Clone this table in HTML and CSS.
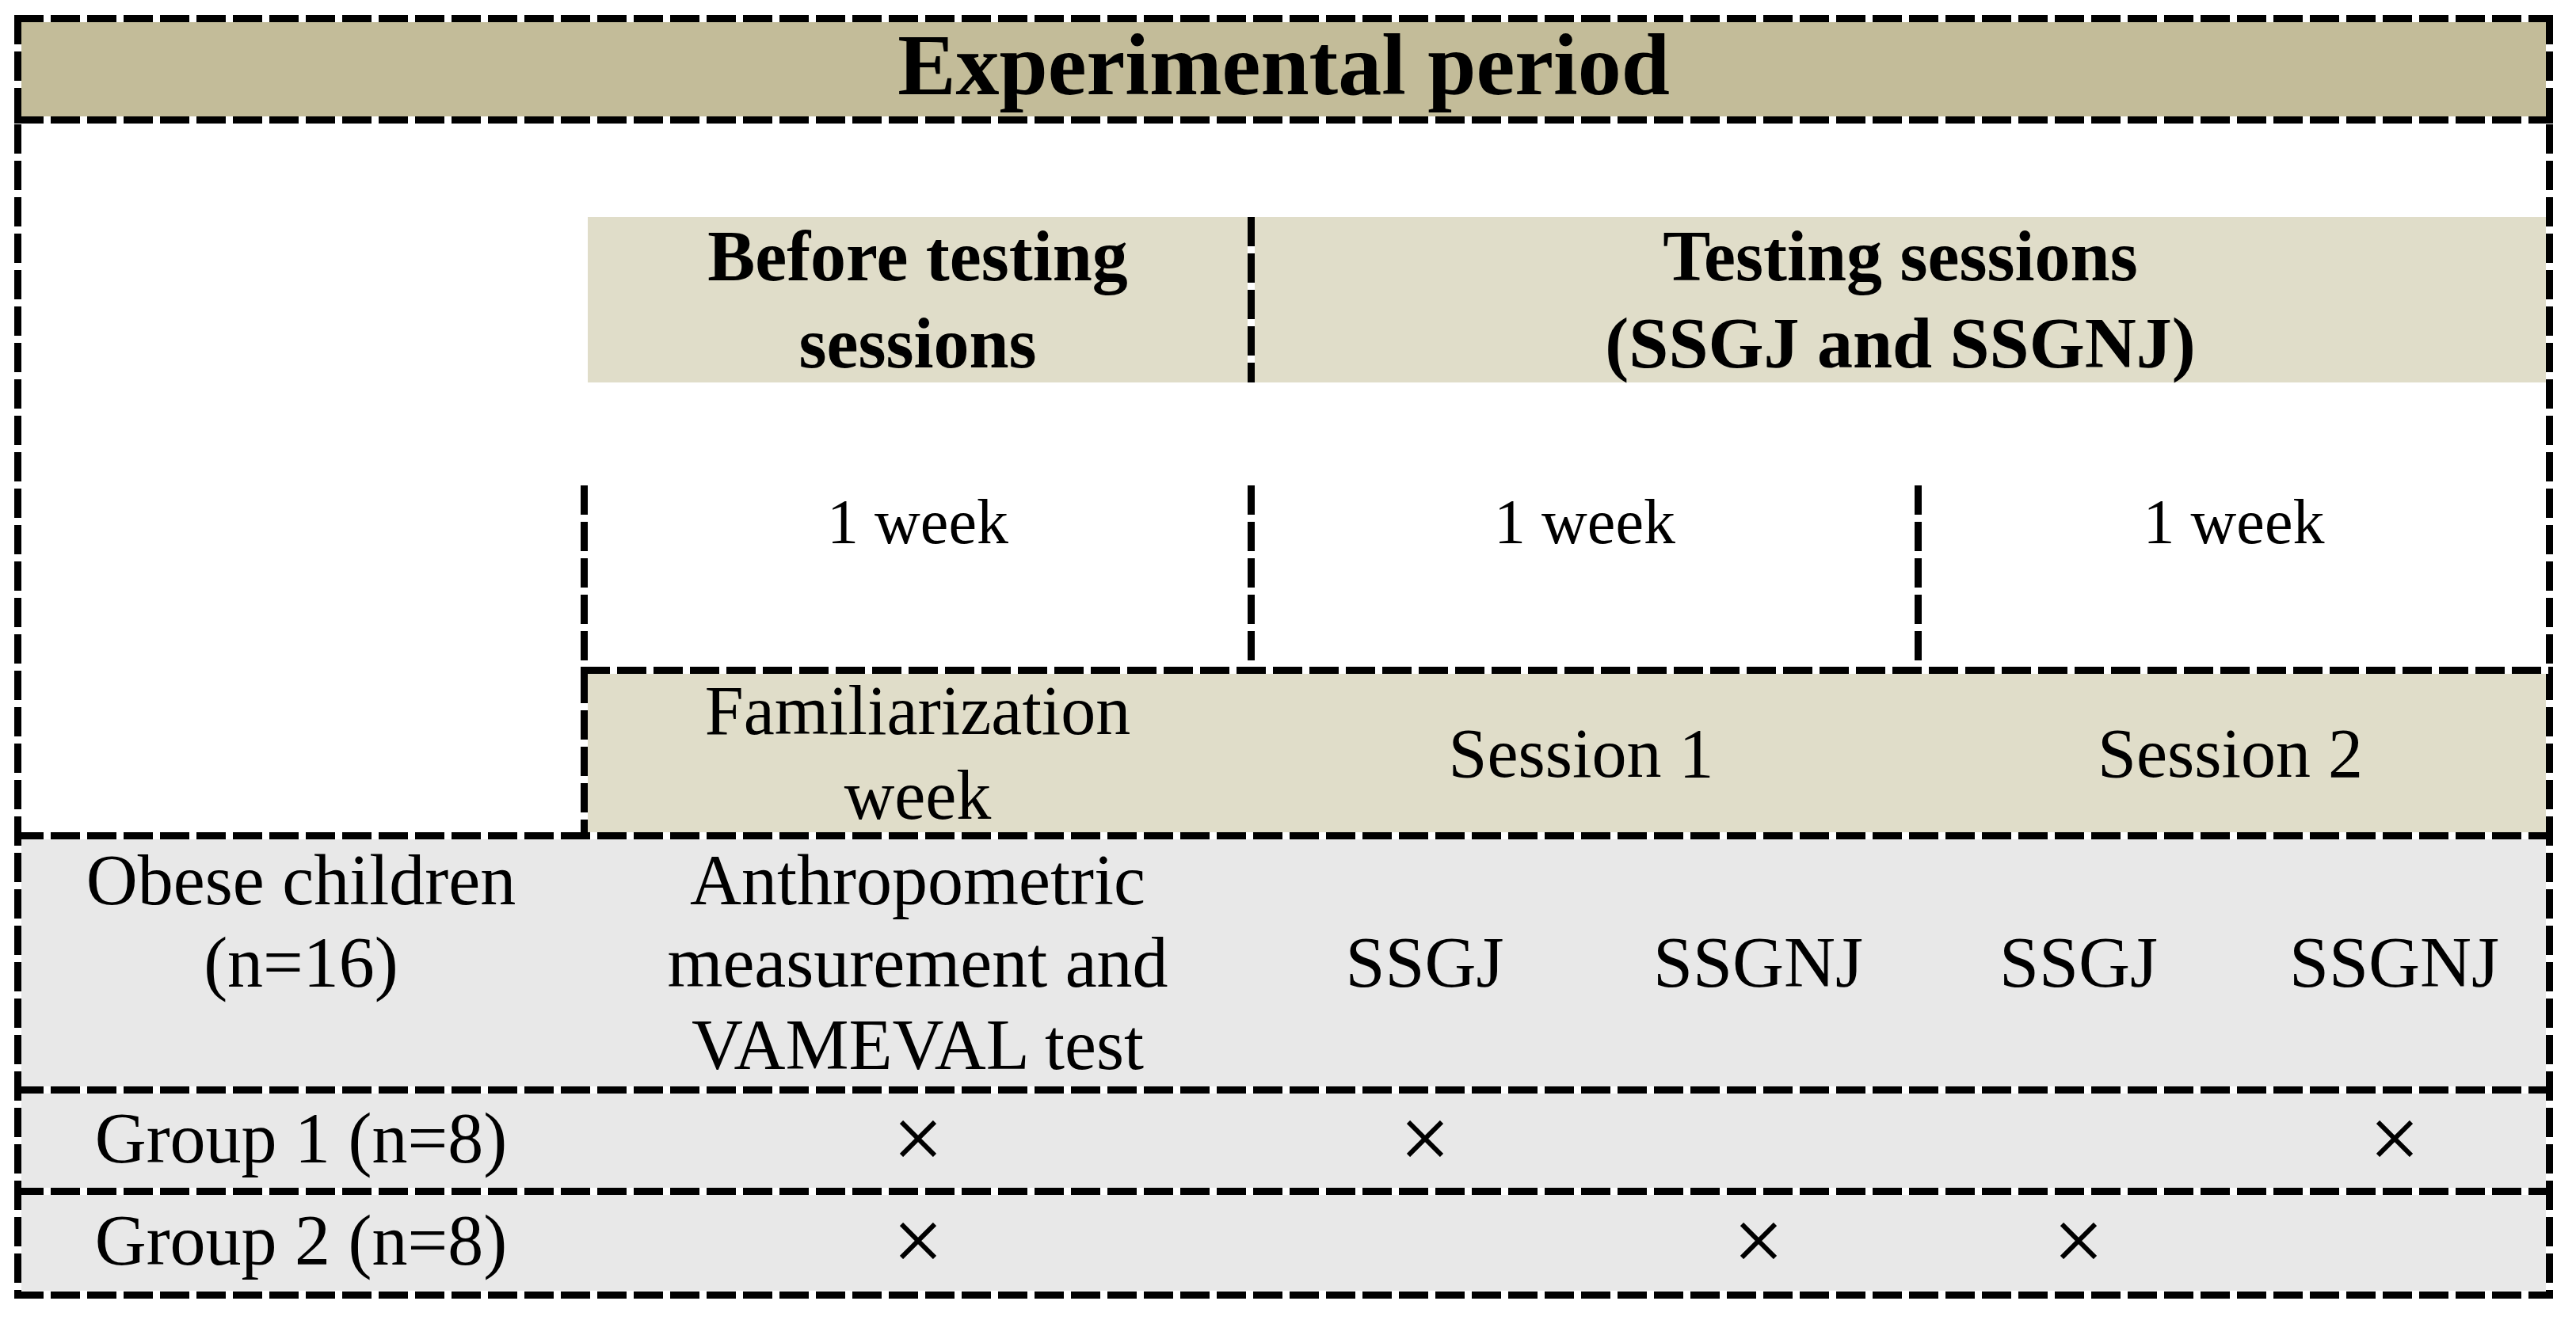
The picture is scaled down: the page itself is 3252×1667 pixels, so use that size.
FILE: index.html
```html
<!DOCTYPE html>
<html lang="en">
<head>
<meta charset="utf-8">
<title>Experimental period</title>
<link rel="stylesheet" href="styles.css">
</head>
<body>
<div class="figure">
  <div class="title">Experimental period</div>
  <div class="hline title-line"></div>
  <div class="grid">
    <div class="hdr hdr-before">Before testing<br>sessions</div>
    <div class="hdr hdr-testing stripe">Testing sessions<br>(SSGJ and SSGNJ)</div>

    <div class="wk wk-1 stripe">1 week</div>
    <div class="wk wk-2 stripe">1 week</div>
    <div class="wk wk-3 stripe">1 week</div>

    <div class="hline line-a"></div>

    <div class="sess sess-1 stripe">Familiarization<br>week</div>
    <div class="sess sess-2">Session 1</div>
    <div class="sess sess-3">Session 2</div>

    <div class="hline line-b"></div>

    <div class="cell r-obese c0 top">Obese children<br>(n=16)</div>
    <div class="cell r-obese c1">Anthropometric<br>measurement and<br>VAMEVAL test</div>
    <div class="cell r-obese c2">SSGJ</div>
    <div class="cell r-obese c3">SSGNJ</div>
    <div class="cell r-obese c4">SSGJ</div>
    <div class="cell r-obese c5">SSGNJ</div>

    <div class="hline line-c"></div>

    <div class="cell r-g1 c0">Group 1 (n=8)</div>
    <div class="cell r-g1 c1"><svg class="mark" viewBox="0 0 46 46"><path d="M2 2L44 44M44 2L2 44"/></svg></div>
    <div class="cell r-g1 c2"><svg class="mark" viewBox="0 0 46 46"><path d="M2 2L44 44M44 2L2 44"/></svg></div>
    <div class="cell r-g1 c3"></div>
    <div class="cell r-g1 c4"></div>
    <div class="cell r-g1 c5"><svg class="mark" viewBox="0 0 46 46"><path d="M2 2L44 44M44 2L2 44"/></svg></div>

    <div class="hline line-d"></div>

    <div class="cell r-g2 c0">Group 2 (n=8)</div>
    <div class="cell r-g2 c1"><svg class="mark" viewBox="0 0 46 46"><path d="M2 2L44 44M44 2L2 44"/></svg></div>
    <div class="cell r-g2 c2"></div>
    <div class="cell r-g2 c3"><svg class="mark" viewBox="0 0 46 46"><path d="M2 2L44 44M44 2L2 44"/></svg></div>
    <div class="cell r-g2 c4"><svg class="mark" viewBox="0 0 46 46"><path d="M2 2L44 44M44 2L2 44"/></svg></div>
    <div class="cell r-g2 c5"></div>
  </div>
</div>
</body>
</html>
```
FILE: styles.css
```css
:root {
  --hd: repeating-linear-gradient(90deg, #000 0 37px, #fff 37px 46px);
  --vd: repeating-linear-gradient(180deg, #000 0 37px, #fff 37px 46px);
  --tan-dark: #c3bc99;
  --tan-light: #e0ddc9;
  --grey: #e8e8e8;
}

html, body {
  margin: 0;
  padding: 0;
  background: #fff;
}

body {
  font-family: "Liberation Serif", "Times New Roman", serif;
  color: #000;
}

.figure {
  box-sizing: border-box;
  margin: 19px 0 0 18px;
  width: 3205px;
  height: 1621px;
  padding: 9px;
  background:
    var(--hd) left top / 100% 9px no-repeat,
    var(--hd) left bottom / 100% 9px no-repeat,
    var(--vd) left top / 9px 100% no-repeat,
    var(--vd) right top / 9px 100% no-repeat,
    #fff;
}

.title {
  height: 119px;
  box-sizing: border-box;
  padding-bottom: 12px;
  background: var(--tan-dark);
  display: flex;
  align-items: center;
  justify-content: center;
  font-weight: bold;
  font-size: 110px;
  line-height: 1;
}

.hline {
  height: 9px;
  background: var(--hd);
}

.title-line {
  margin: 0 -9px;
}

.grid {
  display: grid;
  grid-template-columns: 706px 842px 447px 395px 414px 383px;
  grid-template-rows: 118px 209px 130px 229px 9px 200px 9px 312px 9px 119px 9px 121px;
}

.stripe {
  background: var(--vd) left top / 9px 100% no-repeat, #fff;
  padding-left: 9px;
}

.hdr {
  grid-row: 2;
  display: flex;
  align-items: center;
  justify-content: center;
  text-align: center;
  font-weight: bold;
  font-size: 90px;
  line-height: 110px;
  background-color: var(--tan-light);
}

.hdr-before {
  grid-column: 2;
  margin-left: 9px;
}

.hdr-testing {
  grid-column: 3 / 7;
  background: var(--vd) left top / 9px 100% no-repeat, var(--tan-light);
}

.wk {
  grid-row: 4;
  text-align: center;
  font-size: 80px;
  line-height: 92px;
}

.wk-1 { grid-column: 2; }
.wk-2 { grid-column: 3 / 5; }
.wk-3 { grid-column: 5 / 7; }

.line-a {
  grid-row: 5;
  grid-column: 2 / 7;
  margin-right: -9px;
}

.sess {
  grid-row: 6;
  display: flex;
  align-items: center;
  justify-content: center;
  text-align: center;
  font-size: 88px;
  line-height: 107px;
  background: var(--tan-light);
}

.sess-1 {
  grid-column: 2;
  background: var(--vd) left top / 9px 100% no-repeat, var(--tan-light);
}
.sess-2 { grid-column: 3 / 5; }
.sess-3 { grid-column: 5 / 7; }

.line-b { grid-row: 7; grid-column: 1 / 7; margin: 0 -9px; }
.line-c { grid-row: 9; grid-column: 1 / 7; margin: 0 -9px; }
.line-d { grid-row: 11; grid-column: 1 / 7; margin: 0 -9px; }

.cell {
  display: flex;
  align-items: center;
  justify-content: center;
  text-align: center;
  font-size: 90px;
  line-height: 104px;
  background: var(--grey);
}

.cell.top {
  align-items: flex-start;
}

.r-obese { grid-row: 8; }
.r-g1 { grid-row: 10; padding-bottom: 6px; }
.r-g2 { grid-row: 12; padding-bottom: 6px; }

.c0 { grid-column: 1; }
.c1 { grid-column: 2; padding-left: 9px; }
.c2 { grid-column: 3; }
.c3 { grid-column: 4; }
.c4 { grid-column: 5; }
.c5 { grid-column: 6; }

.mark {
  width: 46px;
  height: 46px;
  display: block;
}

.mark path {
  fill: none;
  stroke: #000;
  stroke-width: 6;
}
```
